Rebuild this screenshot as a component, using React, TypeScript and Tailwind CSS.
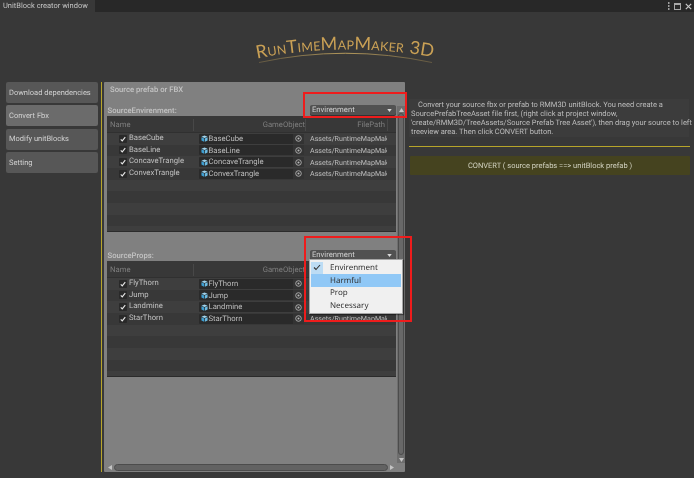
import React from "react";

const menuBtn = ["Download dependencies", "Convert Fbx", "Modify unitBlocks", "Setting"];

function Cube() {
  return (
    <svg width="7" height="7" viewBox="0 0 8 8" className="shrink-0">
      <path d="M4 .5 7.5 2 4 3.5.5 2z" fill="#9fd4ee" />
      <path d="M.5 2.6 3.6 4v3.6L.5 6.2z" fill="#3f9fd2" />
      <path d="M7.5 2.6 4.4 4v3.6l3.1-1.4z" fill="#6cbce4" />
    </svg>
  );
}

function Row({ name, odd }: { name: string; odd: boolean }) {
  return (
    <div className={`flex h-[11.67px] shrink-0 items-center ${odd ? "bg-[#3e3e3e]" : "bg-[#383838]"}`}>
      <div className="flex w-[92px] items-center pl-[12px]">
        <span className="flex h-[8px] w-[8px] items-center justify-center rounded-[1px] bg-[#292929]">
          <svg width="6" height="6" viewBox="0 0 8 8">
            <path d="M1 4.5 3 6.5 7 1.5" fill="none" stroke="#e8e8e8" strokeWidth="1.5" />
          </svg>
        </span>
        <span className="ml-[2px] -translate-y-[1px] whitespace-nowrap text-[#c0c0c0]">{name}</span>
      </div>
      <div className="flex h-[10px] w-[105px] items-center rounded-[1px] bg-[#2a2a2a] pl-[2px] text-[#bdbdbd]">
        <Cube />
        <span className="ml-[0.5px] flex-1 whitespace-nowrap">{name}</span>
        <span className="flex h-[10px] w-[11px] items-center justify-center bg-[#333333] pr-[1px]">
          <svg width="7" height="7" viewBox="0 0 8 8">
            <circle cx="4" cy="4" r="3.2" fill="none" stroke="#b8b8b8" strokeWidth="1" />
            <circle cx="4" cy="4" r="1.2" fill="#b8b8b8" />
          </svg>
        </span>
      </div>
      <div className="w-[83px] overflow-hidden whitespace-nowrap pl-[6px] text-[7.1px] text-[#bdbdbd]">Assets/RuntimeMapMaker3D</div>
    </div>
  );
}

function TreeTable({ rows }: { rows: string[] }) {
  const all = [...rows, "", "", "", "", ""];
  return (
    <div className="ml-[3px] flex h-[116px] w-[289px] flex-col overflow-hidden border-b border-[#2b2b2b] bg-[#383838]">
      <div className="flex h-[17px] shrink-0 items-end border-b border-[#303030] pb-[1px] text-[#7f7f7f]">
        <div className="flex h-[12px] w-[87px] items-center border-r border-[#484848] pl-[3px]">Name</div>
        <div className="flex h-[12px] w-[112px] items-center justify-end border-r border-[#484848]">GameObject</div>
        <div className="flex h-[12px] w-[82px] items-center justify-end border-r border-[#484848] pr-[2px]">FilePath</div>
      </div>
      {all.map((r, i) =>
        r ? (
          <Row key={i} name={r} odd={i % 2 === 0} />
        ) : (
          <div key={i} className={`h-[11.67px] shrink-0 ${i % 2 === 0 ? "bg-[#3e3e3e]" : "bg-[#383838]"}`} />
        ),
      )}
    </div>
  );
}

function Dropdown() {
  return (
    <div className="flex h-[10px] w-[86px] items-center justify-between rounded-[2px] bg-[#515151] pl-[2px] pr-[4px] font-normal text-[#d0d0d0] shadow-[0_1px_0_#333]">
      <span>Envirenment</span>
      <svg width="5" height="3" viewBox="0 0 6 4">
        <path d="M0 0h6L3 4z" fill="#d8d8d8" />
      </svg>
    </div>
  );
}

function SectionHead({ label }: { label: string }) {
  return (
    <div className="flex h-[10px] items-center justify-between pl-[3.5px] pr-[1px] font-medium">
      <span className="translate-y-[1px]">{label}</span>
      <Dropdown />
    </div>
  );
}

function Logo() {
  return (
    <svg width="200" height="40" viewBox="245 30 200 40">
      <defs>
        <path id="arc" d="M257 58.5 Q345 41 436 57.5" />
        <linearGradient id="fade" x1="0" x2="1" y1="0" y2="0">
          <stop offset="0" stopColor="#8f7a4c" stopOpacity="0.5" />
          <stop offset="0.5" stopColor="#b59a5c" />
          <stop offset="1" stopColor="#8f7a4c" stopOpacity="0.5" />
        </linearGradient>
      </defs>
      <text fill="#c9a055" fontFamily="Lato, sans-serif" fontSize="12.5" letterSpacing="0.2">
        <textPath href="#arc">
          <tspan fontSize="18">R</tspan>UN<tspan fontSize="18">T</tspan>IME<tspan fontSize="18">M</tspan>AP<tspan fontSize="18">M</tspan>AKER <tspan fontSize="18" dx="2">3D</tspan>
        </textPath>
      </text>
      <path d="M259 62.5 Q345 44 432 62.5" fill="none" stroke="url(#fade)" strokeWidth="1" />
    </svg>
  );
}

export default function App() {
  return (
    <div className="flex h-[478px] w-[694px] flex-col overflow-hidden bg-[#383838] text-[7.7px] leading-none blur-[0.25px] [font-variant-ligatures:none] [text-rendering:geometricPrecision]" style={{ fontFamily: "Roboto, 'Liberation Sans', sans-serif" }}>
      <div className="flex h-[12px] shrink-0 items-center justify-between bg-[#282828]">
        <div className="flex h-[12px] w-[95px] items-center whitespace-nowrap bg-[#383838] pl-[3px] text-[7.5px] text-[#c4c4c4]">UnitBlock creator window</div>
        <div className="flex items-center gap-[4px] pr-[2px]">
          <svg width="3" height="8" viewBox="0 0 3 8"><path d="M1 1h1.5M1 4h1.5M1 7h1.5" stroke="#c8c8c8" strokeWidth="1.4" /></svg>
          <svg width="7" height="7" viewBox="0 0 7 7"><rect x=".5" y=".5" width="6" height="6" fill="none" stroke="#a8a8a8" /><path d="M0 1.5h7" stroke="#a8a8a8" /></svg>
          <svg width="7" height="7" viewBox="0 0 7 7"><path d="M.8.8l5.4 5.4M6.2.8.8 6.2" stroke="#c8c8c8" strokeWidth="1.2" /></svg>
        </div>
      </div>
      <div className="flex h-[70px] shrink-0 justify-center pr-[4px] pt-[18px]">
        <Logo />
      </div>
      <div className="flex h-[390px] shrink-0">
        <div className="ml-[6px] flex w-[92px] flex-col gap-[2.3px] text-[7.5px] text-[#d2d2d2]">
          {menuBtn.map((b, i) => (
            <div key={b} className={`flex h-[21px] items-center rounded-[2px] pl-[3px] ${i === 1 ? "bg-[#6b6b6b]" : "bg-[#575757]"}`}>
              {b}
            </div>
          ))}
        </div>
        <div className="ml-[3px] w-[1px] bg-[#b7a52a]" />
        <div className="relative ml-[2px] flex w-[301px] flex-col rounded-[1px] bg-[#808080]">
          <div className="flex min-h-0 flex-1">
            <div className="min-w-0 flex-1 text-[#c2c2c2]">
              <div className="h-[23px] pl-[6px] pt-[4px] font-medium">Source prefab or FBX</div>
              <SectionHead label="SourceEnvirenment:" />
              <div className="h-[1px]" />
              <TreeTable rows={["BaseCube", "BaseLine", "ConcaveTrangle", "ConvexTrangle"]} />
              <div className="h-[18px]" />
              <SectionHead label="SourceProps:" />
              <div className="h-[1px]" />
              <TreeTable rows={["FlyThorn", "Jump", "Landmine", "StarThorn"]} />
            </div>
            <div className="mt-[24px] flex w-[8px] shrink-0 flex-col items-center bg-[#6e6e6e] pb-[1px] pt-[2px]">
              <svg width="5" height="4" viewBox="0 0 5 4" className="shrink-0"><path d="M0 4h5L2.5 0z" fill="#c4c4c4" /></svg>
              <div className="mt-[1px] w-[6px] flex-1 rounded-full border border-[#4c4c4c] bg-[#686868]" />
              <svg width="5" height="4" viewBox="0 0 5 4" className="mt-[3px] shrink-0"><path d="M0 0h5L2.5 4z" fill="#c4c4c4" /></svg>
            </div>
          </div>
          <div className="flex h-[9px] shrink-0 items-center pl-[4px] pr-[11px]">
            <svg width="4" height="5" viewBox="0 0 4 5" className="shrink-0"><path d="M4 0v5L0 2.5z" fill="#c4c4c4" /></svg>
            <div className="mx-[2px] h-[7px] flex-1 rounded-full border border-[#4c4c4c] bg-[#626262]" />
            <svg width="4" height="5" viewBox="0 0 4 5" className="shrink-0"><path d="M0 0v5l4-2.5z" fill="#c4c4c4" /></svg>
          </div>

          <div className="absolute left-[199px] top-[10px] h-[26px] w-[104px] border-2 border-[#ee1c1c]" />
          <div className="absolute left-[205px] top-[177px] z-10 flex h-[55px] w-[94px] flex-col border border-[#a6a6a6] bg-[#f0f0f0] px-[1px] pt-[1.5px] text-[#333333] shadow-[1px_1px_1px_rgba(0,0,0,0.4)]" style={{ fontFamily: "'Noto Sans', sans-serif" }}>
            {["Envirenment", "Harmful", "Prop", "Necessary"].map((m, i) => (
              <div key={m} className={`relative flex h-[12.8px] shrink-0 items-center pl-[19px] text-[8px] ${i === 1 ? "bg-[#90c8f6]" : ""}`}>
                {i === 0 && (
                  <span className="absolute left-0 top-0 flex h-[12.8px] w-[12px] items-center justify-center bg-[#bcdcf4]">
                    <svg width="8" height="7" viewBox="0 0 8 7"><path d="M1 3.5 3 5.5 7 1" fill="none" stroke="#333" strokeWidth="1.1" /></svg>
                  </span>
                )}
                {m}
              </div>
            ))}
          </div>
          <div className="absolute left-[200px] top-[154px] z-20 h-[86px] w-[108px] border-2 border-[#ee1c1c]" />
        </div>
        <div className="ml-[4px] flex w-[281px] flex-col">
          <div className="mt-[17px] h-[38px] w-[280px] whitespace-nowrap bg-[#3c3c3c] pl-[2px] pt-[2px] text-[7.5px] leading-[8.9px] text-[#bcbcbc]">
            <span className="pl-[7px]">Convert your source fbx or prefab to RMM3D unitBlock. You need create a</span><br />
            SourcePrefabTreeAsset file first, (right click at project window,<br />
            'create/RMM3D/TreeAssets/Source Prefab Tree Asset'), then drag your source to left<br />
            treeview area. Then click CONVERT button.
          </div>
          <div className="mt-[9px] h-[1px] w-[281px] bg-[#b7a52a]" />
          <div className="ml-[1px] mt-[9px] flex h-[19px] w-[280px] items-center justify-center rounded-[1px] bg-[#45431f] text-[7.5px] text-[#d2d2c0]">
            CONVERT ( source prefabs ==&gt; unitBlock prefab )
          </div>
        </div>
      </div>
    </div>
  );
}
